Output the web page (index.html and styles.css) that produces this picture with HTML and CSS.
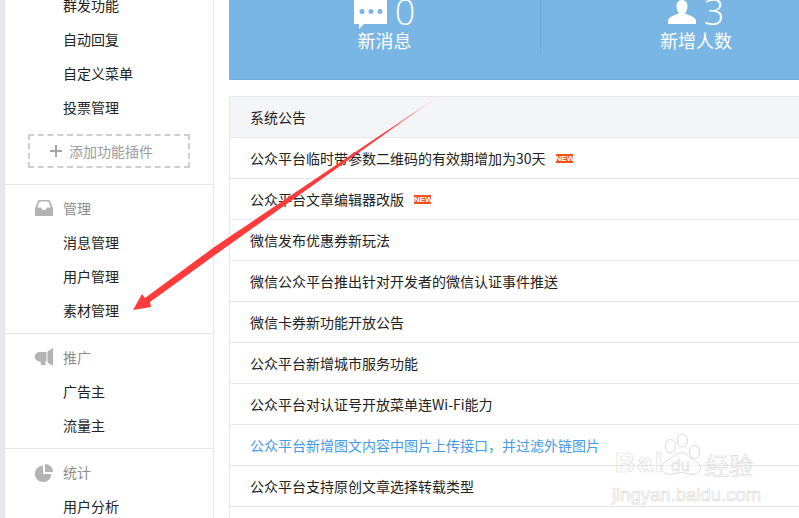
FILE: index.html
```html
<!DOCTYPE html>
<html lang="zh-CN">
<head>
<meta charset="utf-8">
<title>微信公众平台</title>
<link rel="stylesheet" href="styles.css">
</head>
<body>
<div class="page">
  <aside class="sidebar">
    <section class="group group-first">
      <a class="item">群发功能</a>
      <a class="item">自动回复</a>
      <a class="item">自定义菜单</a>
      <a class="item">投票管理</a>
      <div class="add"><span class="plus"></span><span>添加功能插件</span></div>
    </section>
    <section class="group">
      <div class="head">
        <svg class="head-icon icon-tray" viewBox="0 0 18 16"><path d="M3.500 0h11L18 8v8H0V8zM4.600 1.600 2.200 7.400h4l1 2.400h3.600l1-2.400h4l-2.400-5.800z"/></svg>
        <span>管理</span>
      </div>
      <a class="item">消息管理</a>
      <a class="item">用户管理</a>
      <a class="item">素材管理</a>
    </section>
    <section class="group">
      <div class="head">
        <svg class="head-icon icon-horn" viewBox="0 0 18 18"><path d="M18 0v18l-5.500-3.600V3.600zM4.500 4H11.500v9.500H10l.8 3.500H6.500l-1.200-3.500h-.8a4.750 4.750 0 0 1 0-9.500z"/></svg>
        <span>推广</span>
      </div>
      <a class="item">广告主</a>
      <a class="item">流量主</a>
    </section>
    <section class="group">
      <div class="head">
        <svg class="head-icon" viewBox="0 0 18 18"><path d="M8 1.500V10h8.500A8.300 8.300 0 1 1 8 1.500zM10 0a8 8 0 0 1 8 8h-8z"/></svg>
        <span>统计</span>
      </div>
      <a class="item">用户分析</a>
    </section>
  </aside>
  <main class="main">
    <div class="stats">
      <div class="stat">
        <div class="stat-top">
          <svg class="icon-msg" viewBox="0 0 33 29"><path d="M0 0h33v24H10l-5 5v-5H0z"/><circle cx="8" cy="11.500" r="2.500" class="dot"/><circle cx="17" cy="11.500" r="2.500" class="dot"/><circle cx="26" cy="11.500" r="2.500" class="dot"/></svg>
          <span class="num">0</span>
        </div>
        <div class="stat-label">新消息</div>
      </div>
      <div class="stat stat-right">
        <div class="stat-top">
          <svg class="icon-user" viewBox="0 0 28 24"><path d="M14 0c4 0 5.500 3 5.500 6.500 0 3-1.500 5.500-2.500 7 3 1.500 11 3 11 7.500v3H0v-3c0-4.500 8-6 11-7.500-1-1.500-2.500-4-2.500-7C8.500 3 10 0 14 0z"/></svg>
          <span class="num">3</span>
        </div>
        <div class="stat-label">新增人数</div>
      </div>
    </div>
    <div class="notice">
      <div class="notice-head">系统公告</div>
      <div class="row">公众平台临时带参数二维码的有效期增加为30天<span class="new">NEW</span></div>
      <div class="row">公众平台文章编辑器改版<span class="new">NEW</span></div>
      <div class="row">微信发布优惠券新玩法</div>
      <div class="row">微信公众平台推出针对开发者的微信认证事件推送</div>
      <div class="row">微信卡券新功能开放公告</div>
      <div class="row">公众平台新增城市服务功能</div>
      <div class="row">公众平台对认证号开放菜单连Wi-Fi能力</div>
      <div class="row row-link">公众平台新增图文内容中图片上传接口，并过滤外链图片</div>
      <div class="row">公众平台支持原创文章选择转载类型</div>
      <div class="row"></div>
    </div>
  </main>
</div>

<svg class="arrow" viewBox="0 0 799 518">
  <defs>
    <linearGradient id="fade" gradientUnits="userSpaceOnUse" x1="437" y1="97" x2="385" y2="137">
      <stop offset="0" stop-color="#ff3b3b" stop-opacity="0.25"/>
      <stop offset="1" stop-color="#ff3b3b"/>
    </linearGradient>
  </defs>
  <path d="M437 97 215 255 150 302 151 307 133 310 142 294 145 298 215 246.500z" fill="url(#fade)"/>
</svg>

<div class="mark">
  <svg class="paw" viewBox="0 0 46 46">
    <ellipse cx="11" cy="14" rx="5.500" ry="7"/>
    <ellipse cx="24" cy="8" rx="5.500" ry="7"/>
    <ellipse cx="37" cy="20" rx="5.500" ry="7"/>
    <path d="M23 21c5 0 8 4 11 7 5 2 10 6 9 11-1 5-7 6-11 5-3-1-6-1.500-9-1.500S17 43 13 44c-5 1-10-1-11-6-1-4 3-8 8-10 4-3 7-7 13-7z"/>
  </svg>
  <span class="mark-bai">Bai</span>
  <span class="mark-du">du</span>
  <span class="mark-cn">经验</span>
  <span class="mark-url">jingyan.baidu.com</span>
</div>
</body>
</html>
```
FILE: styles.css
```css
* { box-sizing: border-box; }
html, body {
  margin: 0;
  height: 100%;
  overflow: hidden;
  background: #fff;
}
body {
  font-family: "Noto Sans CJK SC", "Liberation Sans", sans-serif;
  font-size: 14px;
  color: #222;
}
.page {
  display: flex;
  width: 799px;
  height: 518px;
  overflow: hidden;
  border-left: 5px solid #e7e8eb;
}
.sidebar {
  flex: 0 0 209px;
  border-right: 1px solid #e7e7eb;
  height: 540px;
}
.group { border-top: 1px solid #e7e7eb; padding: 7px 0 5px; }
.group-first { border-top: 0; padding: 0 0 16px; margin-top: -11px; }
.item, .head {
  display: flex;
  align-items: center;
  height: 34px;
  padding: 0 0 2px 58px;
  line-height: 32px;
}
.head { position: relative; color: #8d8d8d; }
.head-icon {
  position: absolute;
  left: 30px;
  top: 8px;
  width: 18px;
  height: 18px;
  fill: #b3b3b3;
}
.icon-tray { height: 16px; }
.icon-horn { top: 7px; }
.add {
  display: flex;
  align-items: center;
  width: 162px;
  height: 34px;
  margin: 9px 0 0 23px;
  padding-left: 20px;
  border: 2px dashed #cfcfcf;
  color: #9c9c9c;
}
.plus {
  width: 12px;
  height: 12px;
  margin-right: 7px;
  background:
    linear-gradient(#a6a6a6, #a6a6a6) center / 12px 2px no-repeat,
    linear-gradient(#a6a6a6, #a6a6a6) center / 2px 12px no-repeat;
}
.main {
  flex: 0 0 622px;
  margin-left: 15px;
}
.stats {
  display: flex;
  height: 80px;
  background: #7ab6e4;
  border-bottom: 1px solid #6ea9d8;
  overflow: hidden;
}
.stat {
  flex: 0 0 311px;
  height: 53px;
  color: #fff;
  display: flex;
  flex-direction: column;
  align-items: center;
}
.stat-right { border-left: 1px solid #6ca5d3; }
.stat-top {
  display: flex;
  align-items: flex-end;
  gap: 8px;
  height: 29px;
  flex: none;
}
.icon-msg { width: 33px; height: 29px; fill: #fff; flex: none; }
.dot { fill: #7ab6e4; }
.icon-user { width: 28px; height: 24px; fill: #fff; margin-bottom: 5px; flex: none; }
.num {
  font-family: "Open Sans", "Liberation Sans", sans-serif;
  font-weight: 300;
  font-size: 36px;
  line-height: 29px;
  margin-bottom: 3.500px;
}
.stat-label {
  font-size: 18px;
  line-height: 24px;
  margin-top: -1px;
  white-space: nowrap;
}
.notice {
  margin-top: 16px;
  border-top: 1px solid #e7e7eb;
  border-left: 1px solid #e7e7eb;
}
.notice-head {
  height: 41px;
  padding-left: 20px;
  line-height: 40px;
  background: #f4f5f9;
  border-bottom: 1px solid #e7e7eb;
}
.row {
  display: flex;
  align-items: center;
  height: 41px;
  padding-left: 20px;
  border-bottom: 1px solid #e7e7eb;
  white-space: nowrap;
}
.row-link { color: #459ae9; }
.new {
  display: inline-block;
  width: 17px;
  height: 9px;
  margin-left: 10px;
  background: #f4511e;
  color: #fff;
  font-family: "Liberation Sans", sans-serif;
  font-size: 8px;
  font-weight: 700;
  line-height: 9px;
  text-align: center;
  overflow: hidden;
}
.arrow {
  position: absolute;
  left: 0;
  top: 0;
  width: 799px;
  height: 518px;
  pointer-events: none;
}
.mark {
  position: absolute;
  left: 610px;
  top: 430px;
  width: 150px;
  height: 75px;
  color: transparent;
  -webkit-text-stroke: 0.7px rgba(205, 205, 205, 0.7);
  pointer-events: none;
}
.paw {
  position: absolute;
  left: 50px;
  top: 3px;
  width: 43px;
  height: 43px;
  fill: rgba(255, 255, 255, 0.5);
  stroke: rgba(205, 205, 205, 0.8);
  stroke-width: 1;
}
.mark-bai, .mark-du, .mark-cn, .mark-url { position: absolute; white-space: nowrap; }
.mark-bai {
  left: 5px;
  top: 13px;
  font: 700 28px/40px "Liberation Sans", sans-serif;
  letter-spacing: 2px;
}
.mark-du {
  left: 61px;
  top: 26px;
  font: 400 17px/20px "Liberation Sans", sans-serif;
}
.mark-cn {
  left: 95px;
  top: 20px;
  font: 400 24px/30px "Noto Sans CJK SC", sans-serif;
}
.mark-url {
  left: 2px;
  top: 54px;
  font: 400 18.500px/22px "Liberation Sans", sans-serif;
}
```
